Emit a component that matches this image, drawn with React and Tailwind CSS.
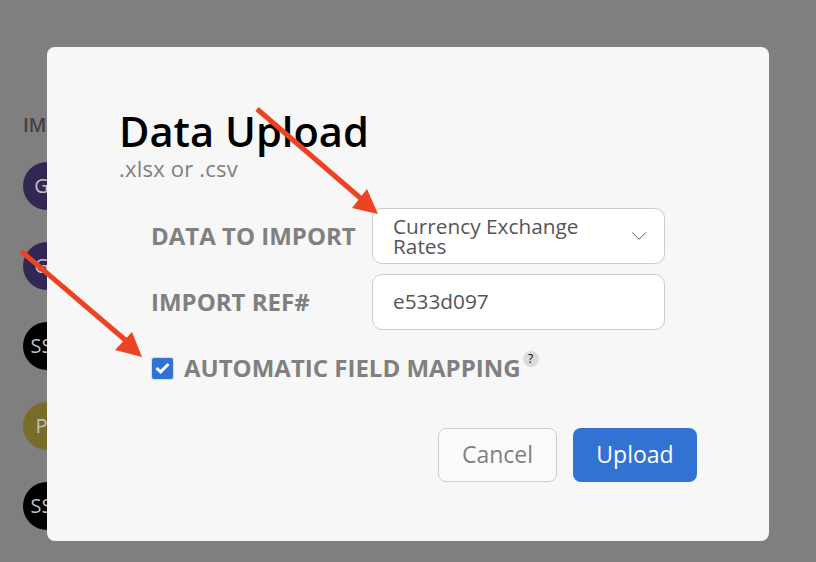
import { ChevronDown } from 'lucide-react';

const PEOPLE = [
  { initials: 'GS', bg: 'bg-[#322753]' },
  { initials: 'GS', bg: 'bg-[#322753]' },
  { initials: 'SSS', bg: 'bg-black' },
  { initials: 'PS', bg: 'bg-[#776c28]' },
  { initials: 'SSS', bg: 'bg-black' },
];

function Arrow({ x1, y1, x2, y2, head }) {
  return (
    <g>
      <line x1={x1} y1={y1} x2={x2} y2={y2} stroke="#ee4323" strokeWidth="5" />
      <polygon points={head} fill="#ee4323" />
    </g>
  );
}

export default function App() {
  return (
    <div className="relative h-[562px] w-[816px] overflow-hidden bg-[#7f7f7f] font-['Open_Sans',sans-serif]">

      {/* Page behind the overlay */}
      <div className="flex flex-col pl-[23px] pt-[113px]">
        <p className="mb-[24px] text-[19px] leading-[25px] font-semibold text-[#3f3f3f]">IMPORTS</p>
        <div className="flex flex-col gap-[32px]">
          {PEOPLE.map((p, i) => (
            <div key={i} className={`flex h-[48px] w-[48px] items-center justify-center rounded-full text-[20px] text-[#bfbfbf] ${p.bg}`}>
              {p.initials}
            </div>
          ))}
        </div>
      </div>

      {/* Modal */}
      <div className="absolute left-[47px] top-[47px] flex h-[494px] w-[722px] flex-col rounded-[8px] bg-[#f7f7f7] pl-[72px] pr-[72px] pt-[59px]">
        <h1 className="text-[41.6px] leading-[50px] font-semibold text-black">Data Upload</h1>
        <p className="text-[22px] leading-[24px] tracking-[0.2px] text-[#808080]">.xlsx or .csv</p>

        <div className="mt-[28px] flex flex-col gap-[10px] pl-[32px]">
          <div className="flex items-center">
            <label className="w-[221px] text-[24px] font-bold text-[#808080]">DATA TO IMPORT</label>
            <div className="flex h-[56px] w-[293px] items-center justify-between rounded-[10px] border border-[#cccccc] bg-white pl-[20px] pr-[12px]">
              <span className="w-[210px] text-[20.8px] leading-[20px] text-[#555555]">Currency Exchange Rates</span>
              <ChevronDown size={26} strokeWidth={0.9} className="text-[#555555]" />
            </div>
          </div>
          <div className="flex items-center">
            <label className="w-[221px] text-[24px] font-bold text-[#808080]">IMPORT REF#</label>
            <div className="flex h-[56px] w-[293px] items-center rounded-[10px] border border-[#cccccc] bg-white pl-[20px] text-[20.8px] text-[#555555]">
              e533d097
            </div>
          </div>
        </div>

        <div className="mt-[21px] flex items-center pl-[32px]">
          <span className="flex h-[23px] w-[23px] items-center justify-center rounded-[3px] border border-[#d5dff0] bg-[#3272d3]">
            <svg width="15" height="12" viewBox="0 0 15 12" fill="none">
              <path d="M1.5 6 L5.6 9.8 L13.5 2" stroke="white" strokeWidth="3" />
            </svg>
          </span>
          <span className="ml-[10px] text-[24px] leading-[24px] font-bold text-[#808080]">AUTOMATIC FIELD MAPPING</span>
          <span className="mb-[18px] ml-[2px] flex h-[16px] w-[16px] items-center justify-center rounded-full bg-[#dcdcdc] text-[12px] leading-none text-black">?</span>
        </div>

        <div className="mt-[43px] flex justify-end gap-[16px]">
          <button className="h-[54px] w-[119px] rounded-[8px] border border-[#cccccc] bg-[#fbfbfb] pb-[2px] text-[23px] font-medium text-[#808080]">Cancel</button>
          <button className="h-[54px] w-[124px] rounded-[8px] bg-[#3272d3] pb-[2px] text-[23px] font-medium text-white">Upload</button>
        </div>
      </div>

      {/* Annotation arrows */}
      <svg className="absolute left-0 top-0" width="816" height="562" viewBox="0 0 816 562">
        <Arrow x1={257} y1={109} x2={365} y2={202} head="378,214 352,208 367,189" />
        <Arrow x1={21} y1={251} x2={130} y2={344} head="142,357 115,350 132,332" />
      </svg>
    </div>
  );
}
